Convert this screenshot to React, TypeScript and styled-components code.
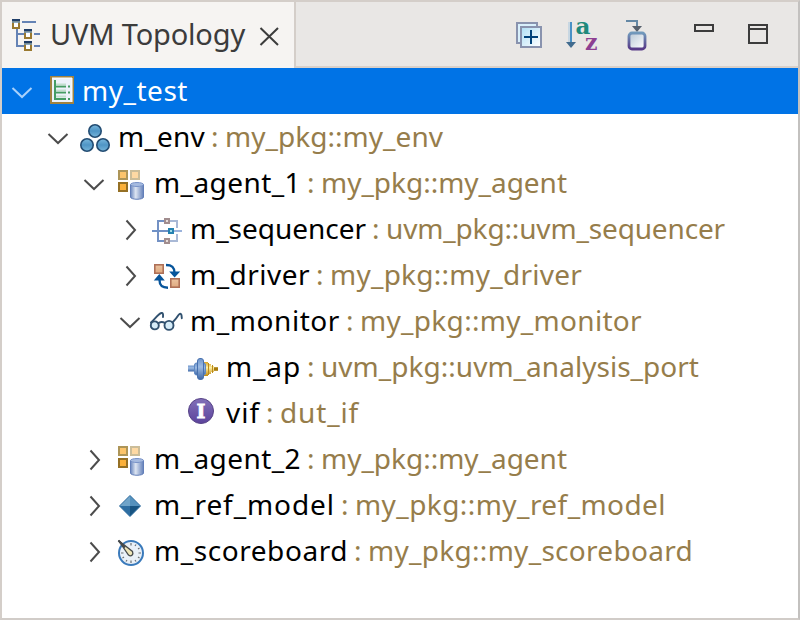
import React, { useLayoutEffect, useRef, useState } from 'react';
import styled, { createGlobalStyle } from 'styled-components';

const GlobalStyle = createGlobalStyle`
  * { box-sizing: border-box; }
  body { margin: 0; background: #fff; font-family: "Noto Sans", sans-serif; }
`;

const Panel = styled.main`
  width: 800px;
  height: 620px;
  display: flex;
  flex-direction: column;
  border: 2px solid #d4cec9;
  border-right-color: #c3c1bf;
  border-bottom-color: #d1ccc8;
  background: #fff;
  overflow: hidden;
`;

const Header = styled.header`
  display: flex;
  height: 66px;
  flex: none;
  background: #e9e7e5;
`;

const Tab = styled.div`
  display: flex;
  align-items: center;
  width: 294px;
  border-right: 2px solid #d4cec9;
  padding-left: 10px;
  background: #f6f4f2;
  color: #3c3c3c;
`;

const Toolbar = styled.div`
  flex: 1;
  display: flex;
  align-items: flex-start;
  padding: 16px 0 0 220px;
  border-bottom: 2px solid #d9d0c9;
`;

const Drawing = styled.svg<{ $gap?: number }>`
  display: block;
  flex: none;
  overflow: visible;
  margin-right: ${p => p.$gap ?? 0}px;
`;

const Tree = styled.div`
  display: flex;
  flex-direction: column;
`;

const Row = styled.div<{ $level: number; $selected?: boolean }>`
  display: flex;
  align-items: center;
  height: 46px;
  padding-left: ${p => 10 + p.$level * 36}px;
  background: ${p => (p.$selected ? '#0073e6' : 'transparent')};
  color: ${p => (p.$selected ? '#fff' : '#000')};
`;

const Text = styled.span<{ $tone?: 'type'; $gap?: number; $size?: number }>`
  flex: none;
  margin-top: -2px;
  margin-left: ${p => p.$gap ?? 0}px;
  font-size: ${p => p.$size ?? 28}px;
  line-height: 46px;
  white-space: pre;
  color: ${p => (p.$tone ? '#967d4b' : 'inherit')};
`;

type FitProps = { children: string; width: number; tone?: 'type'; gap?: number; size?: number };

function FitText({ children, width, tone, gap, size }: FitProps) {
  const ref = useRef<HTMLSpanElement>(null);
  const [tracking, setTracking] = useState(0);
  useLayoutEffect(() => {
    if (ref.current) {
      setTracking((width - ref.current.getBoundingClientRect().width) / children.length);
    }
  }, [children, width]);
  return (
    <Text ref={ref} $tone={tone} $gap={gap} $size={size} style={{ letterSpacing: tracking }}>
      {children}
    </Text>
  );
}

const Chevron = ({ open, color = '#4c4c4c' }: { open?: boolean; color?: string }) => (
  <Drawing $gap={14} width="20" height="20" viewBox="0 0 20 20" fill="none" stroke={color} strokeWidth="2">
    <path d={open ? 'M.5 7 10 16 19.5 7' : 'M6.500 1.500 15 11 6.500 20.500'} />
  </Drawing>
);

const icons = {
  test: (
    <>
      <rect x="5" y="2" width="22" height="26" fill="#edf2fa" stroke="#a1823f" strokeWidth="2" />
      <path d="M6 3h20v24" stroke="#fff" strokeWidth="1" fill="none" />
      <path d="M9 5v20M9 11.5h11M9 17.5h11M9 24h11" stroke="#459c63" strokeWidth="2" fill="none" />
      <path d="M10 9.5h10M10 15.5h10M10 21.5h10" stroke="#c3dfcf" strokeWidth="2" />
      <path d="M23 10.5v2M23 16.5v2M23 23v2" stroke="#459c63" strokeWidth="2" />
    </>
  ),
  env: (
    <g fill="url(#blueBall)" stroke="#234c72" strokeWidth="1.6">
      <circle cx="13" cy="10" r="6.2" />
      <circle cx="5" cy="24" r="6.2" />
      <circle cx="21" cy="24" r="6.2" />
    </g>
  ),
  agent: (
    <>
      <g strokeWidth="2">
        <rect x="1" y="4" width="8" height="8" fill="#fcc46b" stroke="#ad9558" />
        <rect x="13" y="4" width="8" height="8" fill="#fed9a3" stroke="#cbbd99" />
        <rect x="1" y="16" width="8" height="8" fill="#fbb13c" stroke="#957025" />
      </g>
      <path d="M12.5 17.500v12.500c0 3 13 3 13 0v-12.500z" fill="url(#cylinder)" stroke="#637fb9" />
      <ellipse cx="19" cy="17.500" rx="6.5" ry="2" fill="#a6bbe0" stroke="#7993c8" />
    </>
  ),
  sequencer: (
    <>
      <g fill="none" strokeWidth="2">
        <path d="M11 8H4v20h7" stroke="#7391c4" />
        <path d="M15 8h8v7M15 28h8v-7" stroke="#a9b9d6" />
        <path d="M-2 18h17" stroke="#6f91c6" />
        <path d="M19 18h9" stroke="#9bb3dc" />
      </g>
      <g fill="#e7ddda" stroke="#a18d8e" strokeWidth="2">
        <rect x="11" y="6" width="4" height="4" />
        <rect x="11" y="26" width="4" height="4" />
      </g>
      <rect x="15" y="16" width="4" height="4" fill="#a2dbe7" stroke="#2582b1" strokeWidth="2" />
    </>
  ),
  driver: (
    <>
      <g fill="url(#copper)" stroke="#ae7057" strokeWidth="1.6">
        <rect x=".8" y="5.8" width="8.4" height="8.4" />
        <rect x="16.8" y="19.8" width="8.4" height="8.4" />
      </g>
      <g fill="none" stroke="#07559b" strokeWidth="2.4">
        <path d="M12 6c6 0 8.5 2 8.5 8" />
        <path d="M14 28.7c-6 0-8.5-2-8.5-8" />
      </g>
      <path d="M15.2 12.5h11l-5.6 6zM-.2 21.5h11L5.3 15z" fill="#07559b" />
    </>
  ),
  monitor: (
    <g fill="none" stroke="#31516f" strokeWidth="1.9" strokeLinecap="round">
      <circle cx=".8" cy="20.4" r="4" fill="#d6ecf8" />
      <circle cx="15" cy="20.4" r="4.5" fill="#d6ecf8" />
      <path d="M4.8 17.8q3-1.500 6 0" />
      <path d="M-3 17.5C1 14 4 9 7.5 8q2-.5 1.500 4" />
      <path d="M18.500 17.500Q22 14 24.500 10q2-2.500 3 .2l.3 3" />
    </g>
  ),
  port: (
    <>
      <rect x="-2" y="14.500" width="7" height="6" fill="url(#plug)" />
      <path d="M14 11h4v2h3v2h3v1.500h4v3h-4V21h-3v2h-3v2h-4z" fill="url(#gold)" />
      <path d="M18.500 12v12M22.500 14v8" stroke="#b98a1d" strokeWidth="1" />
      <path d="M24 18h4" stroke="#a77a0b" strokeWidth="3.500" />
      <rect x="4.500" y="12" width="11" height="12" rx="2" fill="url(#plug)" stroke="#5f89c4" />
      <rect x="7.500" y="7.500" width="6" height="21" rx="2.500" fill="url(#plug)" stroke="#4771b0" />
    </>
  ),
  iface: (
    <>
      <circle cx="11" cy="14" r="12.500" fill="url(#violet)" stroke="#574387" />
      <text x="11" y="20.500" textAnchor="middle" fontFamily="DejaVu Serif" fontWeight="700" fontSize="19" fill="#fff" stroke="#fff" strokeWidth=".8">I</text>
    </>
  ),
  model: (
    <>
      <path d="M12 6.500 22.500 17 12 27.500 1.500 17z" fill="#3d7eae" stroke="#2a679a" strokeLinejoin="round" />
      <path d="M12 7v10H2z" fill="#70a4c9" />
      <path d="M12 7v10h10z" fill="#5591bd" />
      <path d="M12 17v10L2 17z" fill="#2e6ea2" />
      <path d="M12 17v10l10-10z" fill="#185482" />
    </>
  ),
  board: (
    <>
      <circle cx="13" cy="18" r="12" fill="#e9f0f8" stroke="#3a7abb" strokeWidth="2" />
      <path d="M13 8v2.500M13 25.500v2.500M3 18h2.500M20.500 18h2.500M18 9.500l-1 1.500M21.500 13l-1.500 1M21.500 23l-1.500-1M18 26.500 17 25M8 26.500 9 25M4.500 23l1.500-1" stroke="#686d70" strokeWidth="1.200" />
      <path d="M.5 5.500 10.500 20q2 1.500 3.500.2t.5-3.700z" fill="#eee6b9" stroke="#45494b" strokeWidth="1.300" />
      <path d="M.5 5.500 7 12.500" stroke="#45494b" strokeWidth="2" />
    </>
  ),
};

type IconName = keyof typeof icons;

const Gradients = () => (
  <defs>
    <linearGradient id="blueBall" x2="0" y2="1"><stop stopColor="#79b7dc" /><stop offset=".5" stopColor="#4f95c5" /><stop offset="1" stopColor="#77b5da" /></linearGradient>
    <linearGradient id="cylinder"><stop stopColor="#6986be" /><stop offset=".4" stopColor="#dde5f2" /><stop offset="1" stopColor="#6380b9" /></linearGradient>
    <linearGradient id="copper" x2="0" y2="1"><stop stopColor="#ebc3a0" /><stop offset="1" stopColor="#dfaa80" /></linearGradient>
    <linearGradient id="plug" x2="0" y2="1"><stop stopColor="#6d94ca" /><stop offset=".4" stopColor="#9ebce3" /><stop offset="1" stopColor="#3e68a8" /></linearGradient>
    <linearGradient id="gold" x2="0" y2="1"><stop stopColor="#d9a320" /><stop offset=".4" stopColor="#fff0a5" /><stop offset="1" stopColor="#c38b0c" /></linearGradient>
    <linearGradient id="violet" x2="0" y2="1"><stop stopColor="#8270b8" /><stop offset="1" stopColor="#5c439c" /></linearGradient>
    <linearGradient id="frame" x2="0" y2="1"><stop stopColor="#719abc" /><stop offset="1" stopColor="#563987" /></linearGradient>
    <linearGradient id="pane" x2="1" y2="1"><stop stopColor="#b8c8d6" /><stop offset="1" stopColor="#fff" /></linearGradient>
    <linearGradient id="sheet" x2="1" y2="1"><stop stopColor="#afdff5" /><stop offset="1" stopColor="#fff" /></linearGradient>
  </defs>
);

type Node = { level: number; open?: boolean; leaf?: boolean; icon: IconName; name: string; nameWidth: number; type: string; typeWidth: number };

const nodes: Node[] = [
  { level: 1, open: true, icon: 'env', name: 'm_env', nameWidth: 87, type: 'my_pkg::my_env', typeWidth: 218 },
  { level: 2, open: true, icon: 'agent', name: 'm_agent_1', nameWidth: 147, type: 'my_pkg::my_agent', typeWidth: 246 },
  { level: 3, icon: 'sequencer', name: 'm_sequencer', nameWidth: 176, type: 'uvm_pkg::uvm_sequencer', typeWidth: 339 },
  { level: 3, icon: 'driver', name: 'm_driver', nameWidth: 120, type: 'my_pkg::my_driver', typeWidth: 252 },
  { level: 3, open: true, icon: 'monitor', name: 'm_monitor', nameWidth: 150, type: 'my_pkg::my_monitor', typeWidth: 282 },
  { level: 4, leaf: true, icon: 'port', name: 'm_ap', nameWidth: 75, type: 'uvm_pkg::uvm_analysis_port', typeWidth: 378 },
  { level: 4, leaf: true, icon: 'iface', name: 'vif', nameWidth: 34, type: 'dut_if', typeWidth: 79 },
  { level: 2, icon: 'agent', name: 'm_agent_2', nameWidth: 147, type: 'my_pkg::my_agent', typeWidth: 246 },
  { level: 2, icon: 'model', name: 'm_ref_model', nameWidth: 181, type: 'my_pkg::my_ref_model', typeWidth: 311 },
  { level: 2, icon: 'board', name: 'm_scoreboard', nameWidth: 194, type: 'my_pkg::my_scoreboard', typeWidth: 325 },
];

const Icon = ({ name }: { name: IconName }) => (
  <Drawing $gap={4} width="32" height="32" viewBox="0 0 32 32">{icons[name]}</Drawing>
);

const ChevronSpace = styled.span`
  flex: none;
  width: 34px;
`;

export default function App() {
  return (
    <>
      <GlobalStyle />
      <Panel>
        <Header>
          <Tab>
            <Drawing $gap={8} width="30" height="36" viewBox="0 0 30 36">
              <Gradients />
              <g fill="none" stroke="#6583b5" strokeWidth="2">
                <path d="M10 5h14M5 11v18h7M6 17h6M22 17h6M22 29h6" />
              </g>
              <g fill="#fff" stroke="#9a7930" strokeWidth="2">
                <rect x="1" y="4" width="6" height="7" />
                <rect x="13" y="14" width="6" height="7" />
                <rect x="13" y="26" width="6" height="7" />
              </g>
              <path d="M0 3h8M12 13h8M12 25h8" stroke="#203e68" strokeWidth="2" />
              <path d="M0 5h8M12 15h8M12 27h8" stroke="#6e94b5" strokeWidth="1.500" />
            </Drawing>
            <FitText width={195} size={29}>UVM Topology</FitText>
            <Drawing width="30" height="30" viewBox="0 0 30 30">
              <path d="m15.500 8 17.500 17M33 8 15.500 25" stroke="#3c3c3c" strokeWidth="2" />
            </Drawing>
          </Tab>
          <Toolbar>
            <Drawing $gap={22} width="28" height="32" viewBox="516 18 28 32">
              <rect x="517" y="23" width="20" height="20" fill="#d9f0fb" stroke="#8993ae" strokeWidth="2" />
              <rect x="521" y="27" width="20" height="20" fill="url(#sheet)" stroke="#8993ae" strokeWidth="2" />
              <path d="M524 37h14M531 30v14" stroke="#00427a" strokeWidth="2" />
            </Drawing>
            <Drawing $gap={26} width="34" height="32" viewBox="566 18 34 32">
              <path d="M569 22v20" stroke="#c8d7e2" strokeWidth="2" />
              <path d="M571 22v22" stroke="#4a91c5" strokeWidth="2" />
              <path d="M566 42h10l-5 6z" fill="#416b8e" />
              <text x="575.5" y="34" fontFamily="DejaVu Serif" fontWeight="700" fontSize="23" fill="#20897b">a</text>
              <text x="585" y="50" fontFamily="DejaVu Serif" fontWeight="700" fontSize="22" fill="#8d3f92">z</text>
            </Drawing>
            <Drawing $gap={46} width="22" height="32" viewBox="626 18 22 32">
              <path d="M626 21h11v6" fill="none" stroke="#6488a5" strokeWidth="2" />
              <path d="M632 26h10l-5 6z" fill="#57616d" />
              <rect x="629" y="33" width="16" height="16" rx="3" fill="url(#pane)" stroke="url(#frame)" strokeWidth="2.800" />
            </Drawing>
            <Drawing $gap={34} width="20" height="32" viewBox="694 18 20 32">
              <rect x="695" y="25" width="18" height="6" fill="none" stroke="#3c3c3c" strokeWidth="2" />
            </Drawing>
            <Drawing width="20" height="32" viewBox="748 18 20 32">
              <path d="M749 25h18v18h-18zM749 29h18" fill="none" stroke="#3c3c3c" strokeWidth="2" />
            </Drawing>
          </Toolbar>
        </Header>
        <Tree>
          <Row $level={0} $selected>
            <Chevron open color="#a9d1fb" />
            <Icon name="test" />
            <FitText width={106}>my_test</FitText>
          </Row>
          {nodes.map(n => (
            <Row key={n.name} $level={n.level}>
              {n.leaf ? <ChevronSpace /> : <Chevron open={n.open} />}
              <Icon name={n.icon} />
              <FitText width={n.nameWidth}>{n.name}</FitText>
              <FitText width={14} gap={6} tone="type">: </FitText>
              <FitText width={n.typeWidth} tone="type">{n.type}</FitText>
            </Row>
          ))}
        </Tree>
      </Panel>
    </>
  );
}
